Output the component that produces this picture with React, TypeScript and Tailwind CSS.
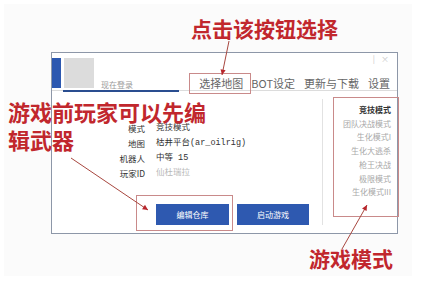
import React, { ReactElement } from "react";

const ui = { fontFamily: '"Noto Sans CJK SC", "Liberation Sans", sans-serif' };
const note = {
  fontFamily: '"Noto Sans CJK SC", "Liberation Serif", serif',
};

const info: { label: string; value: string; muted?: boolean }[] = [
  { label: "模式", value: "竞技模式" },
  { label: "地图", value: "枯井平台(ar_oilrig)" },
  { label: "机器人", value: "中等 15" },
  { label: "玩家ID", value: "仙杜瑞拉", muted: true },
];

const modes: string[] = [
  "竞技模式",
  "团队决战模式",
  "生化模式I",
  "生化大逃杀",
  "枪王决战",
  "极限模式",
  "生化模式III",
];

function Arrow(p: { x1: number; y1: number; x2: number; y2: number }): ReactElement {
  const a = Math.atan2(p.y2 - p.y1, p.x2 - p.x1);
  const l = 6;
  const w = 0.45;
  const hx1 = p.x2 - l * Math.cos(a - w);
  const hy1 = p.y2 - l * Math.sin(a - w);
  const hx2 = p.x2 - l * Math.cos(a + w);
  const hy2 = p.y2 - l * Math.sin(a + w);
  return (
    <g>
      <line x1={p.x1} y1={p.y1} x2={p.x2} y2={p.y2} stroke="#a8473f" strokeWidth="1" />
      <polygon points={`${p.x2},${p.y2} ${hx1},${hy1} ${hx2},${hy2}`} fill="#b8262c" />
    </g>
  );
}

export default function App(): ReactElement {
  return (
    <div className="relative h-[286px] w-[440px] overflow-hidden bg-white" style={ui}>
      <div className="absolute left-[4px] top-[4px] h-[272px] w-[408px] bg-[#fbfbfb]" />

      {/* launcher window */}
      <div className="relative ml-[51px] pt-[52px]">
        <div className="flex h-[182px] w-[347px] flex-col border border-[#8d97a8] bg-white">
          <div className="relative flex h-[43px] items-start border-b border-[#dcdcdc]">
            <div className="mt-[5px] h-[30px] w-[9px] bg-[#2c58b0]" />
            <div className="ml-[3px] mt-[5px] h-[30px] w-[30px] bg-[#dcdcdc]" />
            <span className="ml-[7px] mt-[27px] text-[8px] leading-[10px] text-[#9a9a9a]">现在登录</span>
            <div className="ml-auto mr-[7px] mt-[23px] flex gap-[9px] text-[11px] leading-[14px] text-[#666]">
              <span>选择地图</span>
              <span className="ml-[-1px]">BOT设定</span>
              <span>更新与下载</span>
              <span>设置</span>
            </div>
            <div className="absolute right-[8px] top-[1px] flex gap-[6px] text-[8px] leading-[10px] text-[#c8c8c8]">
              <span>|</span>
              <span>×</span>
            </div>
            <div className="absolute bottom-[-2px] left-[11px] h-[2px] w-[116px] bg-[#2a4d90]" />
          </div>

          <div className="flex flex-1">
            <div className="my-[8px] flex w-[271px] flex-col border-r border-[#e2e2e2]">
              <div className="mt-[24px] flex flex-col gap-[5px]">
                {info.map((row) => (
                  <div className="flex text-[8.5px] leading-[10px]" key={row.label}>
                    <span className="w-[93px] text-right text-[#333]">{row.label}</span>
                    <span
                      className={`ml-[11px] ${row.muted ? "text-[#b8b8b8]" : "text-[#333]"}`}
                      style={{ fontFamily: '"Liberation Mono", "Noto Sans CJK SC", monospace' }}
                    >
                      {row.value}
                    </span>
                  </div>
                ))}
              </div>
              <div className="ml-[104px] mt-[26px] flex gap-[8px]">
                <button className="h-[21px] w-[73px] bg-[#2e59b0] text-[8px] text-white">编辑仓库</button>
                <button className="h-[21px] w-[72px] bg-[#2e59b0] text-[8px] text-white">启动游戏</button>
              </div>
            </div>
            <div className="flex flex-1 flex-col items-end pr-[6px] pt-[12px]">
              {modes.map((m, i) => (
                <span
                  className={`text-[8px] leading-[13.7px] ${i === 0 ? "font-bold text-[#333]" : "text-[#a8a8a8]"}`}
                  key={m}
                >
                  {m}
                </span>
              ))}
            </div>
          </div>
        </div>
      </div>

      {/* red highlight boxes */}
      <div className="absolute left-[189px] top-[73px] h-[21px] w-[62px] border border-[#c98a8a]" />
      <div className="absolute left-[333px] top-[97px] h-[120px] w-[66px] border border-[#c98a8a]" />
      <div className="absolute left-[136px] top-[195px] h-[36px] w-[97px] border border-[#c98a8a]" />

      {/* annotations */}
      <svg className="absolute left-0 top-0" width="440" height="286">
        <Arrow x1={229} y1={41} x2={222} y2={75} />
        <Arrow x1={71} y1={158} x2={148} y2={210} />
        <Arrow x1={342} y1={249} x2={367} y2={205} />
      </svg>
      <div className="absolute left-[8px] top-[100px] text-[22px] font-bold leading-[22px] text-[#c1272d]" style={note}>
        游戏前玩家可以先编
      </div>
      <div className="absolute left-[8px] top-[128px] text-[22px] font-bold leading-[22px] text-[#c1272d]" style={note}>
        辑武器
      </div>
      <div className="absolute left-[191px] top-[15px] text-[21px] font-bold leading-[26px] text-[#c1272d]" style={note}>
        点击该按钮选择
      </div>
      <div className="absolute left-[309px] top-[245px] text-[21px] font-bold leading-[26px] text-[#c1272d]" style={note}>
        游戏模式
      </div>
    </div>
  );
}
